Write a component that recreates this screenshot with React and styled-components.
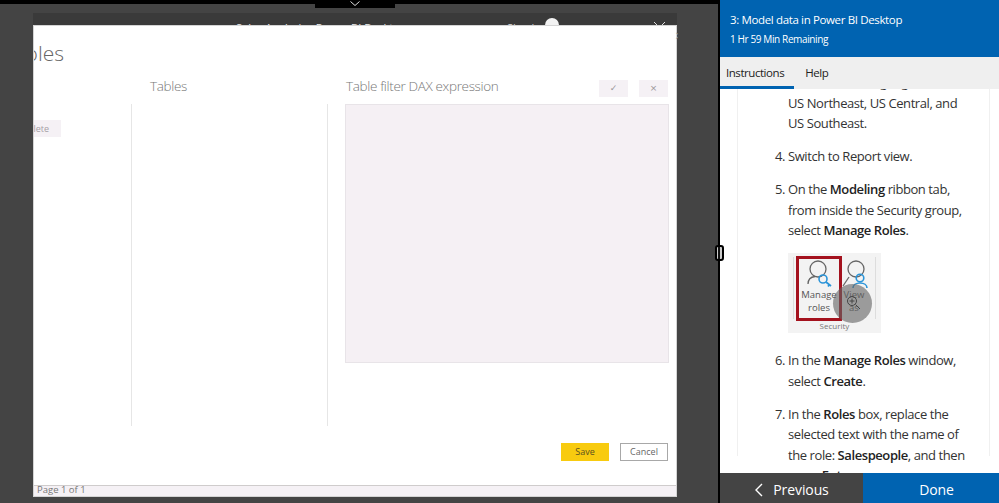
import React from "react";
import styled, { createGlobalStyle } from "styled-components";

const GlobalStyle = createGlobalStyle`
  html, body {
    margin: 0;
    padding: 0;
    width: 999px;
    height: 503px;
    overflow: hidden;
    background: #444;
    font-family: "Open Sans", "Noto Sans", sans-serif;
  }
`;

const App = () => (
  <Page>
    <GlobalStyle />
    <LeftPane>
      <TopStrip />
      <Notch>
        <svg width="12" height="6" viewBox="0 0 12 6">
          <path d="M1.5 0.5 L6 4.5 L10.5 0.5" fill="none" stroke="#ddd" strokeWidth="1" />
        </svg>
      </Notch>
      <AppWindow>
        <TitleBar>
          <QuickIcons>
            <svg width="50" height="12" viewBox="0 0 50 12">
              <rect x="1" y="9" width="11" height="11" fill="none" stroke="#999" />
              <circle cx="28" cy="14" r="6" fill="none" stroke="#888" />
              <circle cx="52" cy="14" r="6" fill="none" stroke="#888" />
            </svg>
          </QuickIcons>
          <TitleText>Sales Analysis - Power BI Desktop</TitleText>
          <SignIn>Sign in</SignIn>
          <Avatar />
          <WindowIcons>
            <svg width="50" height="12" viewBox="0 0 50 12">
              <rect x="1" y="8" width="9" height="9" fill="none" stroke="#bbb" />
              <path d="M37 4 L48 15 M48 4 L37 15" stroke="#ddd" strokeWidth="1" />
            </svg>
          </WindowIcons>
        </TitleBar>
        <Dialog>
          <CloseMark>×</CloseMark>
          <HeadingClip>
            <Heading>Manage roles</Heading>
          </HeadingClip>
          <Columns>
            <Column $width="98px">
              <ColumnHead />
              <ColumnBody $divider>
                <DeleteButton>Delete</DeleteButton>
              </ColumnBody>
            </Column>
            <Column $width="196px">
              <ColumnHead $pad="18px">
                <ColumnTitle>Tables</ColumnTitle>
              </ColumnHead>
              <ColumnBody $divider />
            </Column>
            <Column $width="1fr">
              <ColumnHead $pad="18px">
                <ColumnTitle>Table filter DAX expression</ColumnTitle>
                <FilterActions>
                  <FilterButton>✓</FilterButton>
                  <FilterButton>×</FilterButton>
                </FilterActions>
              </ColumnHead>
              <FilterBox />
            </Column>
          </Columns>
          <Actions>
            <SaveButton>Save</SaveButton>
            <CancelButton>Cancel</CancelButton>
          </Actions>
          <PageFooter>Page 1 of 1</PageFooter>
        </Dialog>
      </AppWindow>
    </LeftPane>
    <Splitter>
      <SplitterGrip />
    </Splitter>
    <Panel>
      <PanelHeader>
        <LabTitle>3: Model data in Power BI Desktop</LabTitle>
        <Remaining>1 Hr 59 Min Remaining</Remaining>
      </PanelHeader>
      <Tabs>
        <Tab $active>Instructions</Tab>
        <Tab>Help</Tab>
      </Tabs>
      <Scroller>
        <Sheet>
          <Steps>
            <Step>
              <StepNumber />
              <StepText>
                Add the following regions: US West,
                <br />
                US Northeast, US Central, and
                <br />
                US Southeast.
              </StepText>
            </Step>
            <Step>
              <StepNumber>4.</StepNumber>
              <StepText>Switch to Report view.</StepText>
            </Step>
            <Step>
              <StepNumber>5.</StepNumber>
              <StepText>
                On the <b>Modeling</b> ribbon tab,
                <br />
                from inside the Security group,
                <br />
                select <b>Manage Roles</b>.
                <RibbonShot>
                  <RibbonButton $selected>
                    <svg width="38" height="30" viewBox="0 0 38 30">
                      <circle cx="18" cy="10" r="8" fill="none" stroke="#666" strokeWidth="1.3" />
                      <path d="M8 25 C8 20.5 11 18 15 17.5" fill="none" stroke="#666" strokeWidth="1.3" />
                      <circle cx="23" cy="20" r="4" fill="none" stroke="#2b94d8" strokeWidth="1.6" />
                      <path d="M26 23 L31 27 M29.5 25.5 L28 27.5" fill="none" stroke="#2b94d8" strokeWidth="1.8" />
                    </svg>
                    <RibbonLabel>
                      Manage
                      <br />
                      roles
                    </RibbonLabel>
                  </RibbonButton>
                  <RibbonButton>
                    <svg width="38" height="30" viewBox="0 0 38 30">
                      <circle cx="21" cy="10" r="8" fill="none" stroke="#666" strokeWidth="1.3" />
                      <path d="M8 27 L14 18" fill="none" stroke="#666" strokeWidth="1.3" />
                      <circle cx="25" cy="19" r="3.8" fill="none" stroke="#2b94d8" strokeWidth="1.6" />
                      <path d="M18 29 C18 26 21 24 25 24 C29 24 32 26 32 29" fill="none" stroke="#2b94d8" strokeWidth="1.6" />
                    </svg>
                    <RibbonLabel>
                      View
                      <br />
                      as
                    </RibbonLabel>
                  </RibbonButton>
                  <RibbonGroup>Security</RibbonGroup>
                  <Pointer>
                    <svg width="22" height="22" viewBox="0 0 22 22">
                      <circle cx="10" cy="9" r="4.5" fill="none" stroke="#444" strokeWidth="1" />
                      <path d="M10 6.5 V11.5 M7.5 9 H12.5 M13.5 12.5 L18 17" fill="none" stroke="#444" strokeWidth="1" />
                    </svg>
                  </Pointer>
                </RibbonShot>
              </StepText>
            </Step>
            <Step>
              <StepNumber>6.</StepNumber>
              <StepText>
                In the <b>Manage Roles</b> window,
                <br />
                select <b>Create</b>.
              </StepText>
            </Step>
            <Step>
              <StepNumber>7.</StepNumber>
              <StepText>
                In the <b>Roles</b> box, replace the
                <br />
                selected text with the name of
                <br />
                the role: <b>Salespeople</b>, and then
                <br />
                press <b>Enter</b>.
              </StepText>
            </Step>
          </Steps>
        </Sheet>
      </Scroller>
      <PanelFooter>
        <PreviousButton>
          <svg width="10" height="14" viewBox="0 0 10 14">
            <path d="M8 1 L2 7 L8 13" fill="none" stroke="#fff" strokeWidth="1.4" />
          </svg>
          Previous
        </PreviousButton>
        <DoneButton>Done</DoneButton>
      </PanelFooter>
    </Panel>
  </Page>
);

const Page = styled.div`
  position: relative;
  display: flex;
  width: 999px;
  height: 503px;
  overflow: hidden;
`;

const LeftPane = styled.div`
  position: relative;
  width: 718px;
  height: 503px;
  background: #444;
  flex-shrink: 0;
`;

const TopStrip = styled.div`
  height: 4px;
  background: #000;
`;

const Notch = styled.div`
  position: absolute;
  top: 0;
  left: 315px;
  width: 80px;
  height: 8px;
  background: #000;
  display: flex;
  justify-content: center;
  align-items: flex-start;
  padding-top: 1px;
  box-sizing: border-box;
`;

const AppWindow = styled.div`
  margin: 9px 0 0 33px;
  width: 644px;
`;

const TitleBar = styled.div`
  position: relative;
  height: 12px;
  background: #3a3a3a;
  overflow: hidden;
  display: flex;
  padding-left: 14px;
  box-sizing: border-box;
`;

const QuickIcons = styled.div`
  width: 189px;
`;

const TitleText = styled.div`
  width: 271px;
  padding-top: 8px;
  font-size: 11px;
  line-height: 14px;
  color: #eee;
  white-space: nowrap;
`;

const SignIn = styled.div`
  width: 38px;
  padding-top: 8px;
  font-size: 11px;
  line-height: 14px;
  color: #ddd;
`;

const Avatar = styled.div`
  width: 14px;
  height: 14px;
  margin-top: 5px;
  border-radius: 50%;
  background: #f2f2f2;
`;

const WindowIcons = styled.div`
  margin-left: 58px;
`;

const Dialog = styled.div`
  position: relative;
  height: 472px;
  background: #fff;
  border: 1px solid #d4d4d4;
  box-sizing: border-box;
  display: flex;
  flex-direction: column;
`;

const CloseMark = styled.div`
  position: absolute;
  top: 1px;
  right: -2px;
  width: 3px;
  overflow: hidden;
  font-size: 15px;
  line-height: 17px;
  color: #999;
  font-weight: 300;
`;

const HeadingClip = styled.div`
  width: 30px;
  height: 54px;
  overflow: hidden;
  display: flex;
  justify-content: flex-end;
`;

const Heading = styled.div`
  margin-top: 12px;
  font-size: 21px;
  line-height: 30px;
  font-weight: 300;
  color: #666;
  white-space: nowrap;
`;

const Columns = styled.div`
  display: flex;
  height: 346px;
`;

const Column = styled.div`
  display: flex;
  flex-direction: column;
  ${({ $width }) => ($width === "1fr" ? "flex: 1;" : `width: ${$width};`)}
`;

const ColumnHead = styled.div`
  height: 24px;
  display: flex;
  justify-content: space-between;
  padding: 0 8px 0 ${({ $pad }) => $pad || "0"};
  box-sizing: border-box;
`;

const ColumnTitle = styled.div`
  font-size: 13.5px;
  line-height: 13px;
  letter-spacing: -0.35px;
  font-weight: 300;
  color: #777;
`;

const ColumnBody = styled.div`
  flex: 1;
  padding-top: 16px;
  box-sizing: border-box;
  border-right: ${({ $divider }) => ($divider ? "1px solid #e6e6e6" : "none")};
`;

const DeleteButton = styled.div`
  width: 27px;
  height: 17px;
  background: #f5f1f5;
  overflow: hidden;
  display: flex;
  justify-content: flex-end;
  padding-right: 12px;
  box-sizing: border-box;
  font-size: 9px;
  line-height: 17px;
  color: #a5a0a5;
  white-space: nowrap;
`;

const FilterActions = styled.div`
  display: flex;
  gap: 11px;
`;

const FilterButton = styled.div`
  width: 29px;
  height: 17px;
  background: #f5f1f5;
  font-size: 9px;
  line-height: 17px;
  text-align: center;
  color: #9a969a;
  font-family: "DejaVu Sans", sans-serif;
`;

const FilterBox = styled.div`
  margin: 0 7px 0 17px;
  height: 259px;
  background: #f5f0f4;
  border: 1px solid #e8e4e8;
  box-sizing: border-box;
`;

const Actions = styled.div`
  display: flex;
  justify-content: flex-end;
  gap: 11px;
  padding: 17px 8px 0 0;
`;

const SaveButton = styled.div`
  width: 48px;
  height: 18px;
  background: #f8cb0f;
  font-size: 9px;
  line-height: 18px;
  text-align: center;
  color: #5b5020;
`;

const CancelButton = styled.div`
  width: 48px;
  height: 18px;
  box-sizing: border-box;
  border: 1px solid #a8a8a8;
  background: #fff;
  font-size: 9px;
  line-height: 16px;
  text-align: center;
  color: #666;
`;

const PageFooter = styled.div`
  margin-top: 24px;
  flex: 1;
  background: #f5f1f5;
  border-top: 1px solid #cfcccc;
  padding-left: 3px;
  font-size: 9.5px;
  line-height: 7px;
  color: #777;
  overflow: hidden;
`;

const Splitter = styled.div`
  width: 2px;
  height: 503px;
  background: #000;
  flex-shrink: 0;
`;

const SplitterGrip = styled.div`
  position: absolute;
  left: 715px;
  top: 245px;
  width: 9px;
  height: 16px;
  box-sizing: border-box;
  border: 2px solid #000;
  border-radius: 3px;
  background: linear-gradient(90deg, #ccc 0 1.5px, #111 1.5px 3.5px, #ccc 3.5px);
`;

const Panel = styled.div`
  width: 279px;
  height: 503px;
  display: flex;
  flex-direction: column;
  background: #fff;
  color: #333;
`;

const PanelHeader = styled.div`
  height: 57px;
  flex-shrink: 0;
  background: #0063b1;
  color: #fff;
  padding: 11px 0 0 10px;
  box-sizing: border-box;
`;

const LabTitle = styled.div`
  font-size: 11.5px;
  line-height: 18px;
  letter-spacing: -0.36px;
`;

const Remaining = styled.div`
  margin-top: 3px;
  font-size: 10px;
  line-height: 14px;
  letter-spacing: -0.38px;
`;

const Tabs = styled.div`
  height: 32px;
  flex-shrink: 0;
  display: flex;
  background: #efefef;
`;

const Tab = styled.div`
  padding: ${({ $active }) => ($active ? "0 10px 0 6px" : "0")};
  margin-left: ${({ $active }) => ($active ? "0" : "11px")};
  height: 32px;
  box-sizing: border-box;
  border-bottom: 3px solid ${({ $active }) => ($active ? "#0063b1" : "transparent")};
  font-size: 11.5px;
  line-height: 32px;
  letter-spacing: -0.45px;
  color: #222;
`;

const Scroller = styled.div`
  flex: 1;
  min-height: 0;
  overflow: hidden;
`;

const Sheet = styled.div`
  margin: 0 9px 0 17px;
  height: 100%;
  border: solid #f0f0f0;
  border-width: 0 1px;
  box-sizing: border-box;
  padding-left: 37px;
`;

const Steps = styled.div`
  margin-top: -17px;
  display: flex;
  flex-direction: column;
  gap: 12.5px;
`;

const Step = styled.div`
  display: flex;
  font-size: 13px;
  line-height: 20.5px;
  letter-spacing: -0.42px;
  color: #333;
  white-space: nowrap;
  & b {
    font-weight: 600;
    color: #222;
  }
`;

const StepNumber = styled.div`
  width: 13px;
  flex-shrink: 0;
`;

const StepText = styled.div`
  min-width: 0;
`;

const RibbonShot = styled.div`
  position: relative;
  margin: 12px 0 5px;
  width: 93px;
  height: 80px;
  box-sizing: border-box;
  padding: 3px 0 0 8px;
  background: #f3f3f3;
  display: flex;
  align-items: flex-start;
  letter-spacing: 0;
  &::before,
  &::after {
    content: "";
    position: absolute;
    top: 4px;
    height: 62px;
    width: 1px;
    background: #ddd;
  }
  &::before {
    left: 5px;
  }
  &::after {
    right: 5px;
  }
`;

const RibbonButton = styled.div`
  width: ${({ $selected }) => ($selected ? "46px" : "24px")};
  height: 65px;
  box-sizing: border-box;
  border: ${({ $selected }) => ($selected ? "3px solid #a4121e" : "none")};
  padding-top: ${({ $selected }) => ($selected ? "0" : "3px")};
  display: flex;
  flex-direction: column;
  align-items: center;
`;

const RibbonLabel = styled.div`
  font-size: 9.5px;
  line-height: 13px;
  text-align: center;
  color: #555;
  margin-top: -1px;
`;

const RibbonGroup = styled.div`
  position: absolute;
  left: 0;
  right: 0;
  bottom: 2px;
  text-align: center;
  font-size: 8px;
  line-height: 10px;
  color: #777;
`;

const Pointer = styled.div`
  position: absolute;
  left: 45px;
  top: 31px;
  width: 39px;
  height: 39px;
  border-radius: 50%;
  background: rgba(100, 100, 100, 0.62);
  display: flex;
  align-items: center;
  justify-content: center;
`;

const PanelFooter = styled.div`
  height: 30px;
  flex-shrink: 0;
  display: flex;
`;

const PreviousButton = styled.div`
  width: 143px;
  background: #444;
  color: #fff;
  display: flex;
  align-items: center;
  justify-content: center;
  gap: 9px;
  padding-top: 3px;
  box-sizing: border-box;
  font-size: 14px;
  letter-spacing: -0.1px;
`;

const DoneButton = styled.div`
  flex: 1;
  background: #0063b1;
  color: #fff;
  display: flex;
  align-items: center;
  justify-content: center;
  padding: 3px 0 0 11px;
  font-size: 14px;
  letter-spacing: -0.1px;
`;

export default App;
